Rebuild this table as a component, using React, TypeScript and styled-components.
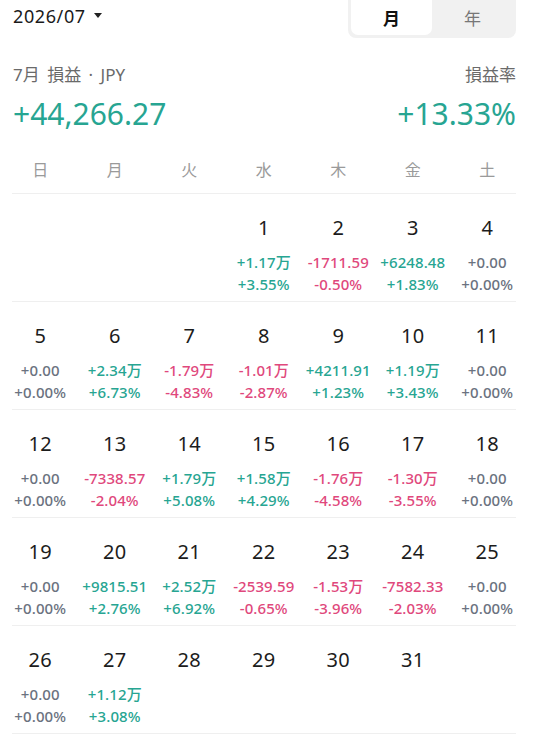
import styled, { createGlobalStyle } from "styled-components";

const GlobalStyle = createGlobalStyle`
  body {
    margin: 0;
    background: #ffffff;
    font-family: "Noto Sans", "Noto Sans CJK JP", sans-serif;
  }
`;

const Page = styled.div`
  width: 534px;
  height: 753px;
  overflow: hidden;
  background: #ffffff;
`;

const TopBar = styled.div`
  display: flex;
  justify-content: space-between;
  align-items: flex-start;
  padding: 0 18px 0 13px;
  height: 38px;
`;

const MonthPicker = styled.div`
  display: flex;
  align-items: center;
  gap: 8px;
  height: 32px;
  font-size: 18px;
  letter-spacing: 0.6px;
  color: #1a1a1a;
`;

const Caret = styled.span`
  width: 0;
  height: 0;
  border-left: 4px solid transparent;
  border-right: 4px solid transparent;
  border-top: 5px solid #222;
  margin-top: -2px;
`;

const Toggle = styled.div`
  display: flex;
  width: 168px;
  height: 38px;
  box-sizing: border-box;
  padding: 0 3px 3px 3px;
  background: #f1f1f1;
  border-radius: 0 0 8px 8px;
`;

const ToggleItem = styled.div<{ $active?: boolean }>`
  flex: ${(p) => (p.$active ? "0 0 81px" : "1")};
  display: flex;
  align-items: center;
  justify-content: center;
  font-size: 17px;
  font-weight: ${(p) => (p.$active ? 700 : 400)};
  color: ${(p) => (p.$active ? "#111" : "#777")};
  background: ${(p) => (p.$active ? "#ffffff" : "transparent")};
  border-radius: 0 0 7px 7px;
`;

const Summary = styled.div`
  padding: 20px 18px 0 13px;
`;

const SummaryRow = styled.div`
  display: flex;
  justify-content: space-between;
  align-items: center;
`;

const Label = styled.div`
  font-size: 17px;
  color: #6a6a6a;
  line-height: 34px;
  word-spacing: 3px;
`;

const BigValue = styled.div`
  font-size: 30px;
  color: #27a592;
  line-height: 44px;
`;

const Calendar = styled.div`
  margin-top: 12px;
`;

const Grid = styled.div`
  display: grid;
  grid-template-columns: repeat(7, 74.5px);
  margin-left: 3px;
`;

const Divider = styled.div`
  height: 1px;
  margin: 0 18px 0 12px;
  background: #efefef;
`;

const WeekdayCell = styled.div`
  text-align: center;
  font-size: 16px;
  color: #9a9a9a;
  line-height: 45px;
`;

const DayCell = styled.div`
  display: flex;
  flex-direction: column;
  align-items: center;
  padding: 20px 0 7px;
  height: 80px;
`;

const DayNum = styled.div`
  font-size: 20px;
  line-height: 28px;
  color: #1c1c1c;
  letter-spacing: 0.3px;
  margin-bottom: 9px;
`;

const Val = styled.div<{ $tone: "up" | "down" | "flat" }>`
  font-size: 15px;
  font-weight: 500;
  line-height: 22px;
  white-space: nowrap;
  letter-spacing: 0.1px;
  color: ${(p) =>
    p.$tone === "up" ? "#27a592" : p.$tone === "down" ? "#e0487c" : "#6b7280"};
`;

type Day = { d: number; v?: string; p?: string };

const days: Day[] = [
  { d: 1, v: "+1.17万", p: "+3.55%" },
  { d: 2, v: "-1711.59", p: "-0.50%" },
  { d: 3, v: "+6248.48", p: "+1.83%" },
  { d: 4, v: "+0.00", p: "+0.00%" },
  { d: 5, v: "+0.00", p: "+0.00%" },
  { d: 6, v: "+2.34万", p: "+6.73%" },
  { d: 7, v: "-1.79万", p: "-4.83%" },
  { d: 8, v: "-1.01万", p: "-2.87%" },
  { d: 9, v: "+4211.91", p: "+1.23%" },
  { d: 10, v: "+1.19万", p: "+3.43%" },
  { d: 11, v: "+0.00", p: "+0.00%" },
  { d: 12, v: "+0.00", p: "+0.00%" },
  { d: 13, v: "-7338.57", p: "-2.04%" },
  { d: 14, v: "+1.79万", p: "+5.08%" },
  { d: 15, v: "+1.58万", p: "+4.29%" },
  { d: 16, v: "-1.76万", p: "-4.58%" },
  { d: 17, v: "-1.30万", p: "-3.55%" },
  { d: 18, v: "+0.00", p: "+0.00%" },
  { d: 19, v: "+0.00", p: "+0.00%" },
  { d: 20, v: "+9815.51", p: "+2.76%" },
  { d: 21, v: "+2.52万", p: "+6.92%" },
  { d: 22, v: "-2539.59", p: "-0.65%" },
  { d: 23, v: "-1.53万", p: "-3.96%" },
  { d: 24, v: "-7582.33", p: "-2.03%" },
  { d: 25, v: "+0.00", p: "+0.00%" },
  { d: 26, v: "+0.00", p: "+0.00%" },
  { d: 27, v: "+1.12万", p: "+3.08%" },
  { d: 28 },
  { d: 29 },
  { d: 30 },
  { d: 31 },
];

function tone(s: string): "up" | "down" | "flat" {
  if (s.startsWith("-")) return "down";
  if (/^\+0\.00/.test(s)) return "flat";
  return "up";
}

const weekdays = ["日", "月", "火", "水", "木", "金", "土"];

export default function App() {
  const cells: (Day | null)[] = [null, null, null, ...days];
  while (cells.length % 7) cells.push(null);
  const weeks: (Day | null)[][] = [];
  for (let i = 0; i < cells.length; i += 7) weeks.push(cells.slice(i, i + 7));

  return (
    <Page>
      <GlobalStyle />
      <TopBar>
        <MonthPicker>
          2026/07 <Caret />
        </MonthPicker>
        <Toggle>
          <ToggleItem $active>月</ToggleItem>
          <ToggleItem>年</ToggleItem>
        </Toggle>
      </TopBar>
      <Summary>
        <SummaryRow>
          <Label>7月 損益 · JPY</Label>
          <Label>損益率</Label>
        </SummaryRow>
        <SummaryRow>
          <BigValue>+44,266.27</BigValue>
          <BigValue>+13.33%</BigValue>
        </SummaryRow>
      </Summary>
      <Calendar>
        <Grid>
          {weekdays.map((w) => (
            <WeekdayCell key={w}>{w}</WeekdayCell>
          ))}
        </Grid>
        <Divider />
        {weeks.map((wk, i) => (
          <div key={i}>
            <Grid>
              {wk.map((c, j) =>
                c ? (
                  <DayCell key={j}>
                    <DayNum>{c.d}</DayNum>
                    {c.v && <Val $tone={tone(c.v)}>{c.v}</Val>}
                    {c.p && <Val $tone={tone(c.p)}>{c.p}</Val>}
                  </DayCell>
                ) : (
                  <DayCell key={j} />
                )
              )}
            </Grid>
            <Divider />
          </div>
        ))}
      </Calendar>
    </Page>
  );
}
